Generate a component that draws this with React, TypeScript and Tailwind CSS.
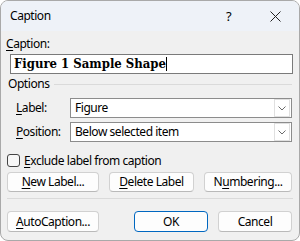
const ui = "font-['Segoe_UI','Noto_Sans',sans-serif] tracking-[-0.45px]";

function Key({ k, rest, pre }: { k: string; rest: string; pre?: string }) {
  return (
    <span>
      {pre}
      <span className="underline underline-offset-2">{k}</span>
      {rest}
    </span>
  );
}

function Btn({ children, w, primary }: { children: React.ReactNode; w: string; primary?: boolean }) {
  return (
    <button
      type="button"
      className={`${w} h-full flex items-center justify-center rounded-[4px] bg-[#fdfdfd] ${
        primary ? 'border border-[#0067c0]' : 'border border-[#d1d1d1] border-b-[#b9b9b9]'
      }`}
    >
      {children}
    </button>
  );
}

function Select({ value }: { value: string }) {
  return (
    <div className="flex-1 h-full flex items-center bg-white border border-[#8c8c8c]">
      <span className="flex-1 pl-[4px]">{value}</span>
      <div className="w-[16px] h-[18px] mr-[1px] flex items-center justify-center border border-[#e0e0e0]">
        <svg width="8" height="5" viewBox="0 0 8 5">
          <path d="M0.5 0.5 L4 4 L7.5 0.5" fill="none" stroke="#6b6b6b" strokeWidth="1" />
        </svg>
      </div>
    </div>
  );
}

export default function App() {
  return (
    <div className={`${ui} w-[300px] h-[241px] flex flex-col overflow-hidden rounded-[8px] border border-[#a9a9a9] bg-[#f0f0f0] text-[12px] leading-[16px] text-black`}>
      {/* title bar */}
      <div className="h-[30px] shrink-0 flex items-center bg-[#eef2f8] pl-[9px]">
        <span className="flex-1">Caption</span>
        <span className="w-[12px] text-[13px] mr-[32px]">?</span>
        <svg width="11" height="11" viewBox="0 0 11 11" className="mr-[18px]">
          <path d="M0.5 0.5 L10.5 10.5 M10.5 0.5 L0.5 10.5" stroke="#222" strokeWidth="1" />
        </svg>
      </div>

      <div className="flex flex-col">
        <div className="mt-[5px] h-[16px] pl-[5px]">
          <Key k="C" rest="aption:" />
        </div>

        <div className="mt-[2px] ml-[9px] w-[283px] h-[20px] flex items-center bg-white border border-[#7a7a7a] pl-[3px]">
          <span className="font-['DejaVu_Serif_Condensed','DejaVu_Serif',serif] font-stretch-condensed font-bold text-[13px] leading-[16px] tracking-[0px]">
            Figure 1 Sample Shape
          </span>
          <span className="w-[1px] h-[14px] bg-black" />
        </div>

        <div className="mt-[2px] h-[16px] flex items-center pl-[7px] pr-[7px]">
          <span>Options</span>
          <div className="flex-1 ml-[5px] border-t border-[#dadada]" />
        </div>

        <div className="mt-[6px] h-[20px] flex items-center pl-[15px] pr-[7px]">
          <span className="w-[54px]">
            <Key k="L" rest="abel:" />
          </span>
          <Select value="Figure" />
        </div>

        <div className="mt-[4px] h-[20px] flex items-center pl-[15px] pr-[7px]">
          <span className="w-[54px]">
            <Key k="P" rest="osition:" />
          </span>
          <Select value="Below selected item" />
        </div>

        <div className="mt-[12px] h-[13px] flex items-center pl-[6px] gap-[4px]">
          <span className="w-[13px] h-[13px] rounded-[3px] border border-[#444] bg-[#f7f7f7]" />
          <Key k="E" rest="xclude label from caption" />
        </div>

        <div className="mt-[5px] h-[20px] flex pl-[6px] pr-[7px] gap-[10px]">
          <Btn w="w-[92px]">
            <Key k="N" rest="ew Label..." />
          </Btn>
          <Btn w="w-[85px]">
            <Key k="D" rest="elete Label" />
          </Btn>
          <Btn w="flex-1">
            <Key pre="N" k="u" rest="mbering..." />
          </Btn>
        </div>

        <div className="mt-[6px] mx-[6px] w-[286px] border-t border-[#dadada]" />

        <div className="mt-[12px] h-[21px] flex pl-[6px] pr-[7px]">
          <Btn w="w-[92px]">
            <Key k="A" rest="utoCaption..." />
          </Btn>
          <div className="w-[35px]" />
          <Btn w="w-[74px]" primary>
            OK
          </Btn>
          <div className="w-[10px]" />
          <Btn w="flex-1">Cancel</Btn>
        </div>
      </div>
    </div>
  );
}
